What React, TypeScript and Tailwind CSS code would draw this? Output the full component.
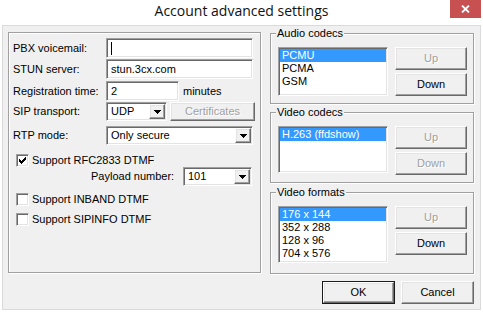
import React from "react";

const sunken =
  "border border-t-[#a0a0a0] border-l-[#a0a0a0] border-r-white border-b-white shadow-[inset_1px_1px_0_#696969,inset_-1px_-1px_0_#e3e3e3]";
const raised =
  "border border-t-white border-l-white border-r-[#696969] border-b-[#696969] shadow-[inset_-1px_-1px_0_#a0a0a0,inset_1px_1px_0_#e3e3e3]";
const etched = "border border-[#a0a0a0] shadow-[1px_1px_0_#fff,inset_1px_1px_0_#fff]";

function Btn({
  children,
  disabled,
  def,
  className = "",
}: {
  children: React.ReactNode;
  disabled?: boolean;
  def?: boolean;
  className?: string;
}) {
  return (
    <div className={`${def ? "border border-[#1a1a1a]" : ""} bg-[#f0f0f0] ${className}`}>
      <div
        className={`${raised} h-full w-full flex items-center justify-center ${
          disabled ? "text-[#a0a0a0] [text-shadow:1px_1px_0_#fff]" : "text-black"
        }`}
      >
        {children}
      </div>
    </div>
  );
}

function Arrow() {
  return (
    <svg width="7" height="4" viewBox="0 0 7 4" shapeRendering="crispEdges">
      <rect x="0" y="0" width="7" height="1" fill="#000" />
      <rect x="1" y="1" width="5" height="1" fill="#000" />
      <rect x="2" y="2" width="3" height="1" fill="#000" />
      <rect x="3" y="3" width="1" height="1" fill="#000" />
    </svg>
  );
}

function Combo({ value, className = "" }: { value: string; className?: string }) {
  return (
    <div className={`${sunken} bg-white flex items-stretch p-[1px] ${className}`}>
      <div className="flex-1 flex items-center pl-[3px]">{value}</div>
      <div className={`${raised} w-[16px] bg-[#f0f0f0] flex items-center justify-center`}>
        <Arrow />
      </div>
    </div>
  );
}

function Input({ value, cursor, className = "" }: { value?: string; cursor?: boolean; className?: string }) {
  return (
    <div className={`${sunken} bg-white h-[20px] flex items-center pl-[4px] ${className}`}>
      {cursor ? <div className="w-[1px] h-[13px] bg-black" /> : value}
    </div>
  );
}

function Check({ checked, label }: { checked?: boolean; label: string }) {
  return (
    <div className="flex items-center h-[13px] ml-[3px]">
      <div className={`${sunken} bg-white w-[13px] h-[13px] flex items-center justify-center`}>
        {checked && (
          <svg width="7" height="7" viewBox="0 0 7 7" shapeRendering="crispEdges">
            <rect x="6" y="0" width="1" height="3" fill="#000" />
            <rect x="5" y="1" width="1" height="3" fill="#000" />
            <rect x="4" y="2" width="1" height="3" fill="#000" />
            <rect x="3" y="3" width="1" height="3" fill="#000" />
            <rect x="2" y="4" width="1" height="3" fill="#000" />
            <rect x="1" y="3" width="1" height="3" fill="#000" />
            <rect x="0" y="2" width="1" height="3" fill="#000" />
          </svg>
        )}
      </div>
      <span className="ml-[3px]">{label}</span>
    </div>
  );
}

function ListBox({ items, className = "" }: { items: string[]; className?: string }) {
  return (
    <div className={`${sunken} bg-white w-[110px] p-[1px] ${className}`}>
      {items.map((it, i) => (
        <div
          key={it}
          className={`h-[13px] leading-[13px] pl-[2px] ${i === 0 ? "bg-[#3399ff] text-white" : ""}`}
        >
          {it}
        </div>
      ))}
    </div>
  );
}

function Group({
  title,
  items,
  listH,
  upDisabled,
  downDisabled,
  h,
  className = "",
}: {
  title: string;
  items: string[];
  listH: string;
  upDisabled?: boolean;
  downDisabled?: boolean;
  h: string;
  className?: string;
}) {
  return (
    <fieldset className={`${etched} w-[204px] ${h} ${className}`}>
      <legend className="ml-[5px] px-[1px] leading-[13px] bg-[#f0f0f0]">{title}</legend>
      <div className="flex pl-[7px] pt-[7px] gap-[7px]">
        <ListBox items={items} className={listH} />
        <div className="flex flex-col gap-[3px]">
          <Btn disabled={upDisabled} className="w-[72px] h-[23px]">
            Up
          </Btn>
          <Btn disabled={downDisabled} className="w-[72px] h-[23px]">
            Down
          </Btn>
        </div>
      </div>
    </fieldset>
  );
}

export default function App() {
  return (
    <div className="w-[483px] h-[312px] bg-white flex flex-col font-['Liberation_Sans',Arial,sans-serif] text-[11px] leading-[13px] text-black">
      <div className="h-[25px] flex items-start shrink-0">
        <div className="w-[33px]" />
        <div className="flex-1 text-center pt-[1px] font-['Open_Sans',sans-serif] text-[14px] leading-[20px] text-[#111]">
          Account advanced settings
        </div>
        <div className="w-[31px] h-[18px] mr-[2px] bg-[#c75050] flex items-center justify-center">
          <svg width="9" height="8" viewBox="0 0 9 8">
            <path d="M1 0.5 L8 7.5 M8 0.5 L1 7.5" stroke="#fff" strokeWidth="1.8" />
          </svg>
        </div>
      </div>
      <div className="mx-[2px] h-[285px] border border-[#dadada] bg-[#f0f0f0] flex flex-col pl-[5px] pr-[6px]">
        <div className="flex items-start">
          <div className={`${etched} mt-[6px] w-[253px] h-[241px] flex flex-col pl-[4px]`}>
            <div className="flex items-center mt-[5px]">
              <span className="w-[93px]">PBX voicemail:</span>
              <Input cursor className="w-[147px]" />
            </div>
            <div className="flex items-center mt-[1px]">
              <span className="w-[93px]">STUN server:</span>
              <Input value="stun.3cx.com" className="w-[147px]" />
            </div>
            <div className="flex items-center mt-[2px]">
              <span className="w-[93px]">Registration time:</span>
              <Input value="2" className="w-[73px]" />
              <span className="ml-[4px]">minutes</span>
            </div>
            <div className="flex items-center mt-[1px]">
              <span className="w-[93px]">SIP transport:</span>
              <Combo value="UDP" className="w-[61px] h-[19px]" />
              <Btn disabled className="ml-[3px] w-[85px] h-[19px]">
                Certificates
              </Btn>
            </div>
            <div className="flex items-center mt-[5px]">
              <span className="w-[93px]">RTP mode:</span>
              <Combo value="Only secure" className="w-[147px] h-[19px]" />
            </div>
            <div className="mt-[9px]">
              <Check checked label="Support RFC2833 DTMF" />
            </div>
            <div className="flex items-center ml-[78px]">
              <span className="w-[92px]">Payload number:</span>
              <Combo value="101" className="w-[69px] h-[19px]" />
            </div>
            <div className="mt-[7px]">
              <Check label="Support INBAND DTMF" />
            </div>
            <div className="mt-[7px]">
              <Check label="Support SIPINFO DTMF" />
            </div>
          </div>
          <div className="ml-[9px] mt-[1px] flex flex-col">
            <Group title="Audio codecs" items={["PCMU", "PCMA", "GSM"]} listH="h-[49px]" upDisabled h="h-[77px]" />
            <Group
              title="Video codecs"
              items={["H.263 (ffdshow)"]}
              listH="h-[47px]"
              upDisabled
              downDisabled
              h="h-[77px]"
              className="mt-[2px]"
            />
            <Group
              title="Video formats"
              items={["176 x 144", "352 x 288", "128 x 96", "704 x 576"]}
              listH="h-[57px]"
              upDisabled
              h="h-[88px]"
              className="mt-[3px]"
            />
          </div>
        </div>
        <div className="flex justify-end gap-[6px] mt-[7px]">
          <Btn def className="w-[73px] h-[23px]">
            OK
          </Btn>
          <Btn className="w-[73px] h-[23px]">Cancel</Btn>
        </div>
      </div>
    </div>
  );
}
